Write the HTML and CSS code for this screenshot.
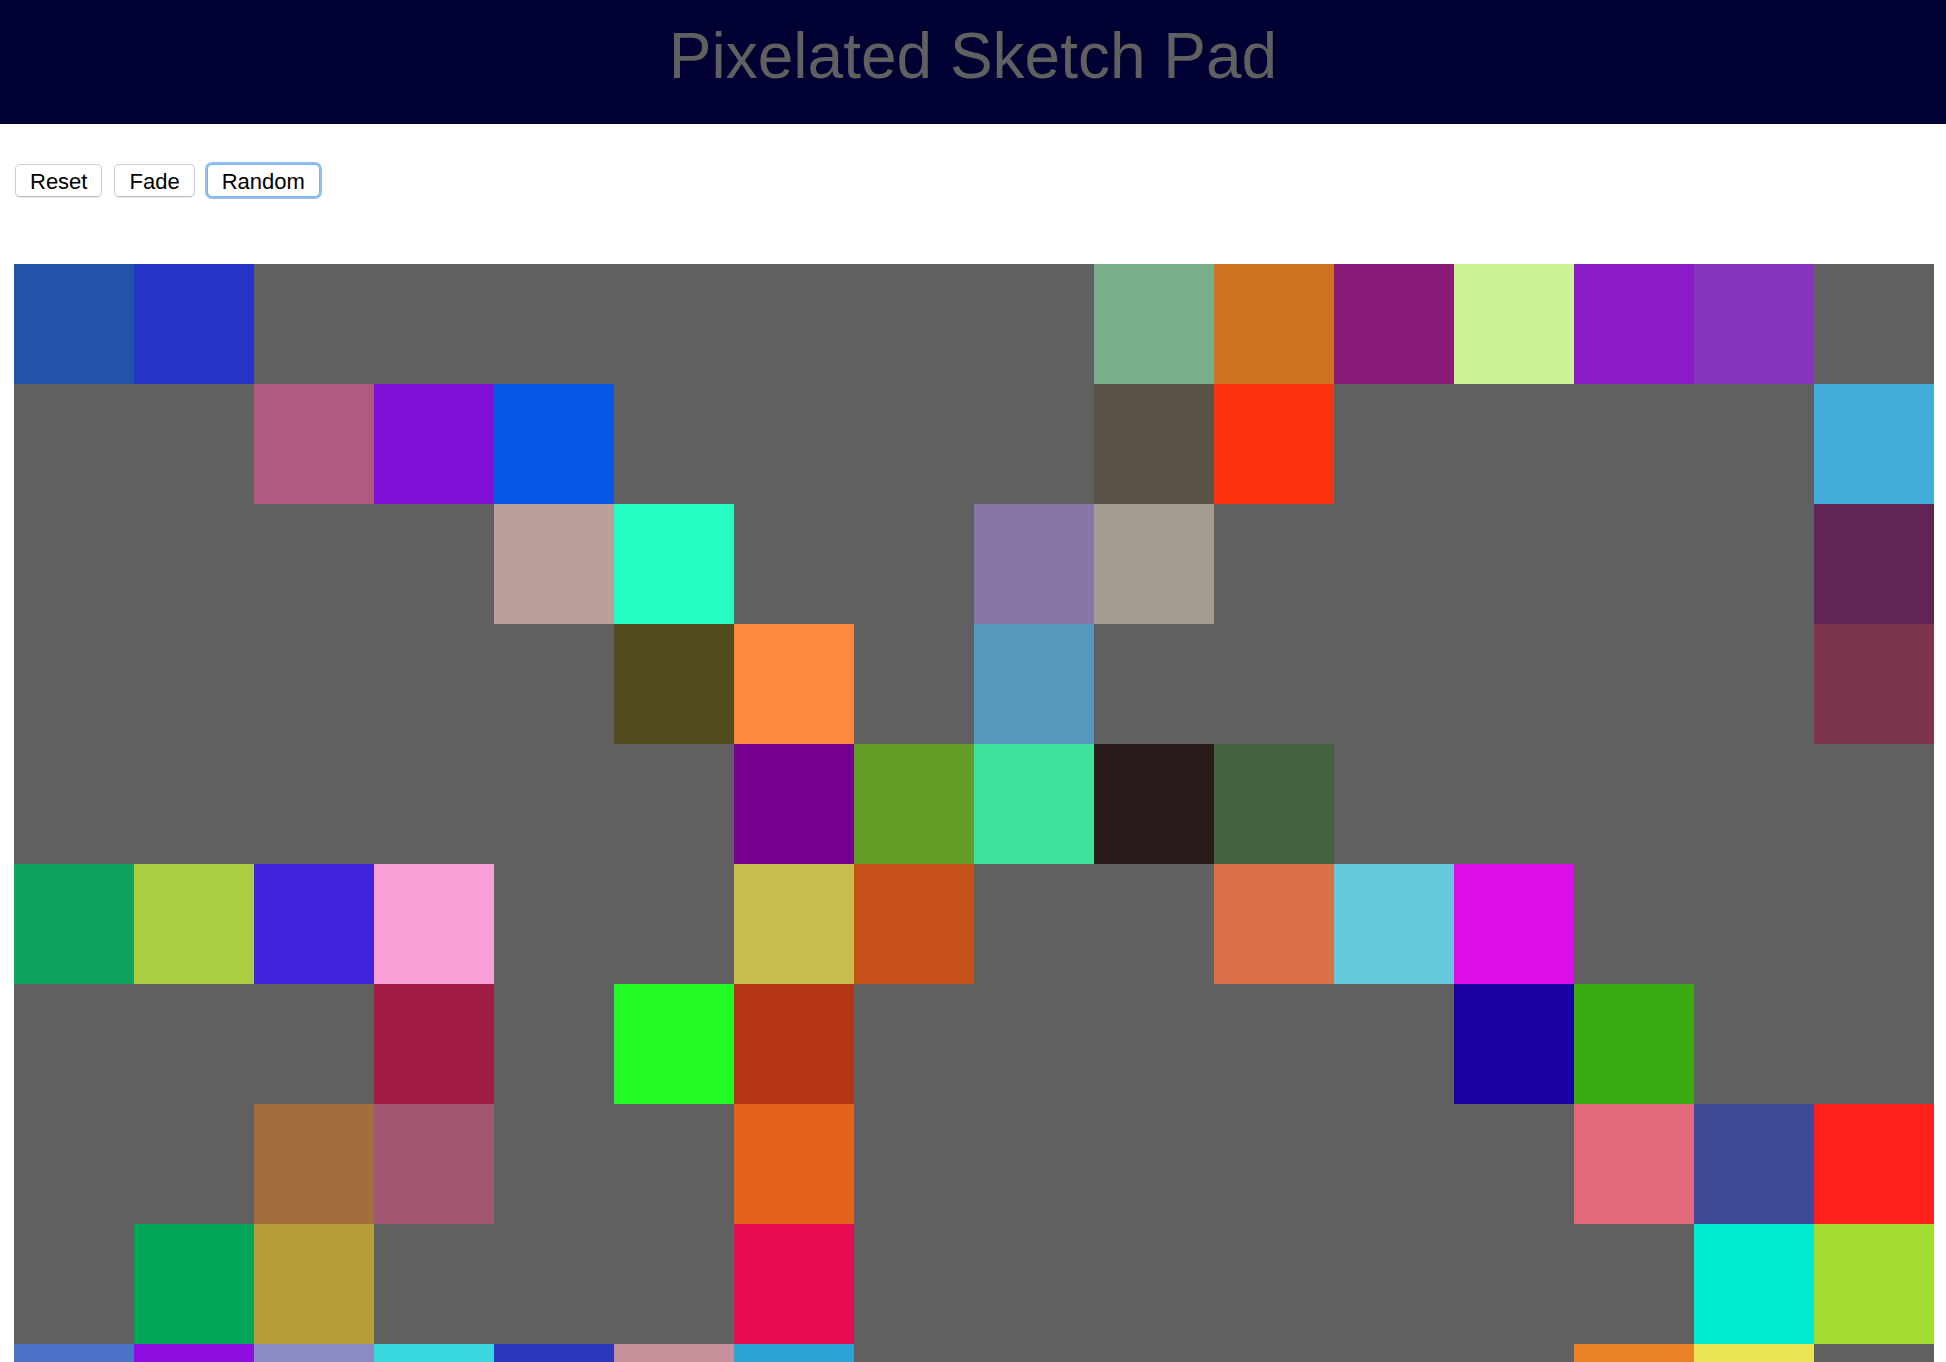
FILE: index.html
```html
<!DOCTYPE html>
<html lang="en">
<head>
<meta charset="utf-8">
<title>Pixelated Sketch Pad</title>
<link rel="stylesheet" href="styles.css">
</head>
<body>
<header class="masthead">
  <h1 class="title">Pixelated Sketch Pad</h1>
</header>
<main class="page">
  <div class="controls">
    <button class="btn" type="button">Reset</button>
    <button class="btn" type="button">Fade</button>
    <button class="btn btn-focus" type="button">Random</button>
  </div>
  <div class="pad">
    <div class="px" style="background:#2352a8"></div><div class="px" style="background:#2535c8"></div><div class="px"></div><div class="px"></div><div class="px"></div><div class="px"></div><div class="px"></div><div class="px"></div><div class="px"></div><div class="px" style="background:#7aae8b"></div><div class="px" style="background:#d07320"></div><div class="px" style="background:#8a1a78"></div><div class="px" style="background:#ccf396"></div><div class="px" style="background:#8c1cc8"></div><div class="px" style="background:#8636bc"></div><div class="px"></div>
    <div class="px"></div><div class="px"></div><div class="px" style="background:#b25a82"></div><div class="px" style="background:#810fd8"></div><div class="px" style="background:#0557e6"></div><div class="px"></div><div class="px"></div><div class="px"></div><div class="px"></div><div class="px" style="background:#5a5245"></div><div class="px" style="background:#fb310f"></div><div class="px"></div><div class="px"></div><div class="px"></div><div class="px"></div><div class="px" style="background:#43acdb"></div>
    <div class="px"></div><div class="px"></div><div class="px"></div><div class="px"></div><div class="px" style="background:#ba9e99"></div><div class="px" style="background:#24fdc4"></div><div class="px"></div><div class="px"></div><div class="px" style="background:#8876a8"></div><div class="px" style="background:#a59c91"></div><div class="px"></div><div class="px"></div><div class="px"></div><div class="px"></div><div class="px"></div><div class="px" style="background:#622455"></div>
    <div class="px"></div><div class="px"></div><div class="px"></div><div class="px"></div><div class="px"></div><div class="px" style="background:#534a1d"></div><div class="px" style="background:#ff8840"></div><div class="px"></div><div class="px" style="background:#5598bb"></div><div class="px"></div><div class="px"></div><div class="px"></div><div class="px"></div><div class="px"></div><div class="px"></div><div class="px" style="background:#7c354a"></div>
    <div class="px"></div><div class="px"></div><div class="px"></div><div class="px"></div><div class="px"></div><div class="px"></div><div class="px" style="background:#78008f"></div><div class="px" style="background:#629d28"></div><div class="px" style="background:#3de19c"></div><div class="px" style="background:#2a1a1a"></div><div class="px" style="background:#456140"></div><div class="px"></div><div class="px"></div><div class="px"></div><div class="px"></div><div class="px"></div>
    <div class="px" style="background:#0fa35f"></div><div class="px" style="background:#abcd40"></div><div class="px" style="background:#4024db"></div><div class="px" style="background:#fa9ed8"></div><div class="px"></div><div class="px"></div><div class="px" style="background:#c9bd50"></div><div class="px" style="background:#c55018"></div><div class="px"></div><div class="px"></div><div class="px" style="background:#d9704a"></div><div class="px" style="background:#65c9db"></div><div class="px" style="background:#dd0de8"></div><div class="px"></div><div class="px"></div><div class="px"></div>
    <div class="px"></div><div class="px"></div><div class="px"></div><div class="px" style="background:#a01c45"></div><div class="px"></div><div class="px" style="background:#22f925"></div><div class="px" style="background:#b33515"></div><div class="px"></div><div class="px"></div><div class="px"></div><div class="px"></div><div class="px"></div><div class="px" style="background:#1a00a2"></div><div class="px" style="background:#3aac12"></div><div class="px"></div><div class="px"></div>
    <div class="px"></div><div class="px"></div><div class="px" style="background:#a46d3c"></div><div class="px" style="background:#a35672"></div><div class="px"></div><div class="px"></div><div class="px" style="background:#e3631b"></div><div class="px"></div><div class="px"></div><div class="px"></div><div class="px"></div><div class="px"></div><div class="px"></div><div class="px" style="background:#e26a7a"></div><div class="px" style="background:#3e4896"></div><div class="px" style="background:#ff1f1b"></div>
    <div class="px"></div><div class="px" style="background:#00a655"></div><div class="px" style="background:#b89c37"></div><div class="px"></div><div class="px"></div><div class="px"></div><div class="px" style="background:#e80d52"></div><div class="px"></div><div class="px"></div><div class="px"></div><div class="px"></div><div class="px"></div><div class="px"></div><div class="px"></div><div class="px" style="background:#00ead0"></div><div class="px" style="background:#a2dd30"></div>
    <div class="px" style="background:#4a73c8"></div><div class="px" style="background:#900de0"></div><div class="px" style="background:#8b8bc4"></div><div class="px" style="background:#38d8de"></div><div class="px" style="background:#2c38bc"></div><div class="px" style="background:#c68f9a"></div><div class="px" style="background:#2aa4d6"></div><div class="px"></div><div class="px"></div><div class="px"></div><div class="px"></div><div class="px"></div><div class="px"></div><div class="px" style="background:#ea8225"></div><div class="px" style="background:#ebe555"></div><div class="px"></div>
  </div>
</main>
</body>
</html>
```
FILE: styles.css
```css
html, body {
  margin: 0;
  padding: 0;
  background: #ffffff;
}

body {
  font-family: "Liberation Sans", Arial, sans-serif;
}

.masthead {
  background: #000033;
  padding: 19px 0 31px;
}

.title {
  margin: 0;
  font-family: "Liberation Sans", Arial, sans-serif;
  font-weight: normal;
  font-size: 64px;
  line-height: 74px;
  color: #606060;
  text-align: center;
}

.page {
  padding: 40px 12px 0 14px;
}

.controls {
  display: flex;
  gap: 12px;
  padding-left: 1px;
  margin-bottom: 67px;
}

.btn {
  font-family: "Liberation Sans", Arial, sans-serif;
  font-size: 22px;
  line-height: 29px;
  color: #000000;
  background: #ffffff;
  border: 1px solid #cfcfcf;
  border-bottom-color: #bdbdbd;
  border-radius: 5px;
  padding: 2px 14px 0;
  margin: 0;
  box-shadow: 0 1px 1px rgba(0, 0, 0, 0.08);
  cursor: pointer;
}

.btn-focus {
  border-color: #7eb2ee;
  box-shadow: 0 0 0 2px rgba(110, 168, 240, 0.75);
}

.pad {
  display: grid;
  grid-template-columns: repeat(16, 120px);
  grid-auto-rows: 120px;
}

.px {
  background: #606060;
}
```
